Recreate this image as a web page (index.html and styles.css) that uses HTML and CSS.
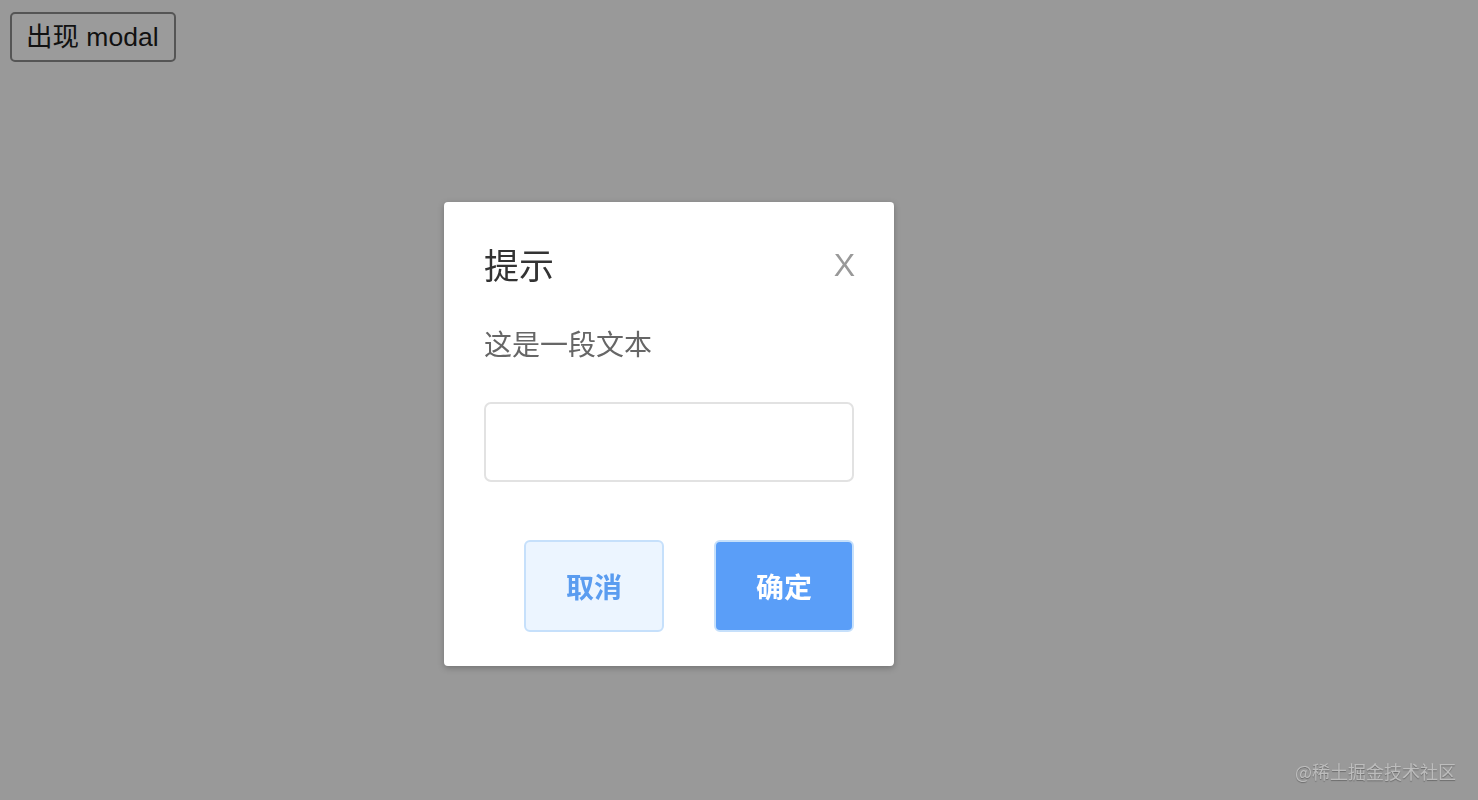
FILE: index.html
```html
<!DOCTYPE html>
<html lang="zh">
<head>
<meta charset="utf-8">
<title>modal</title>
<link rel="stylesheet" href="styles.css">
</head>
<body>
<button class="open-btn">出现 modal</button>

<div class="overlay">
  <div class="modal">
    <div class="modal-header">
      <span class="modal-title">提示</span>
      <span class="modal-close">X</span>
    </div>
    <div class="modal-body">这是一段文本</div>
    <input class="modal-input" type="text">
    <div class="modal-footer">
      <button class="btn btn-cancel">取消</button>
      <button class="btn btn-ok">确定</button>
    </div>
  </div>
</div>

<div class="watermark">@稀土掘金技术社区</div>
</body>
</html>
```

FILE: styles.css
```css
html, body {
  margin: 0;
  height: 100%;
}
body {
  background: #999999;
  font-family: "Liberation Sans", "Noto Sans CJK SC", sans-serif;
  padding: 12px 10px;
  box-sizing: border-box;
}
.open-btn {
  font-family: "Liberation Sans", "Noto Sans CJK SC", sans-serif;
  font-size: 26.5px;
  color: #111;
  background: #9b9b9b;
  border: 2px solid #555;
  border-radius: 5px;
  height: 50px;
  padding: 0 15px 0 14px;
  line-height: 1;
}
.overlay {
  position: fixed;
  inset: 0;
}
.modal {
  position: absolute;
  left: 444px;
  top: 202px;
  width: 450px;
  box-sizing: border-box;
  background: #fff;
  border-radius: 4px;
  box-shadow: 0 2px 6px rgba(0, 0, 0, 0.25);
  padding: 32px 40px 34px 40px;
  display: flex;
  flex-direction: column;
}
.modal-header {
  display: flex;
  justify-content: space-between;
  align-items: center;
  height: 64px;
}
.modal-title {
  font-size: 35px;
  color: #333;
  font-family: "Noto Sans CJK SC", sans-serif;
  line-height: 1;
  margin-top: -5px;
}
.modal-close {
  font-size: 32px;
  color: #999;
  font-family: "Liberation Sans", sans-serif;
  margin-right: -1px;
  margin-top: -3px;
  line-height: 1;
}
.modal-body {
  margin-top: 27px;
  font-size: 28px;
  line-height: 36px;
  color: #666;
  font-family: "Noto Sans CJK SC", sans-serif;
}
.modal-input {
  margin-top: 41px;
  height: 80px;
  box-sizing: border-box;
  width: 370px;
  border: 2px solid #e2e2e2;
  border-radius: 7px;
  outline: none;
  background: #fff;
}
.modal-footer {
  margin-top: 58px;
  display: flex;
  justify-content: flex-end;
  gap: 50px;
}
.btn {
  width: 140px;
  height: 92px;
  box-sizing: border-box;
  border-radius: 6px;
  font-family: "Noto Sans CJK SC", sans-serif;
  font-size: 28px;
  font-weight: 700;
  padding: 0;
}
.btn-cancel {
  background: #ecf5ff;
  border: 2px solid #c6e0fb;
  color: #5a9cf0;
}
.btn-ok {
  background: #5a9ef8;
  border: 2px solid #c6e0fb;
  color: #fff;
}
.watermark {
  position: fixed;
  right: 22px;
  bottom: 20px;
  font-size: 18px;
  color: #bdbdbd;
  text-shadow: 0 1px 1px rgba(0, 0, 0, 0.3);
  font-family: "Noto Sans CJK SC", sans-serif;
  line-height: 1;
}
```
